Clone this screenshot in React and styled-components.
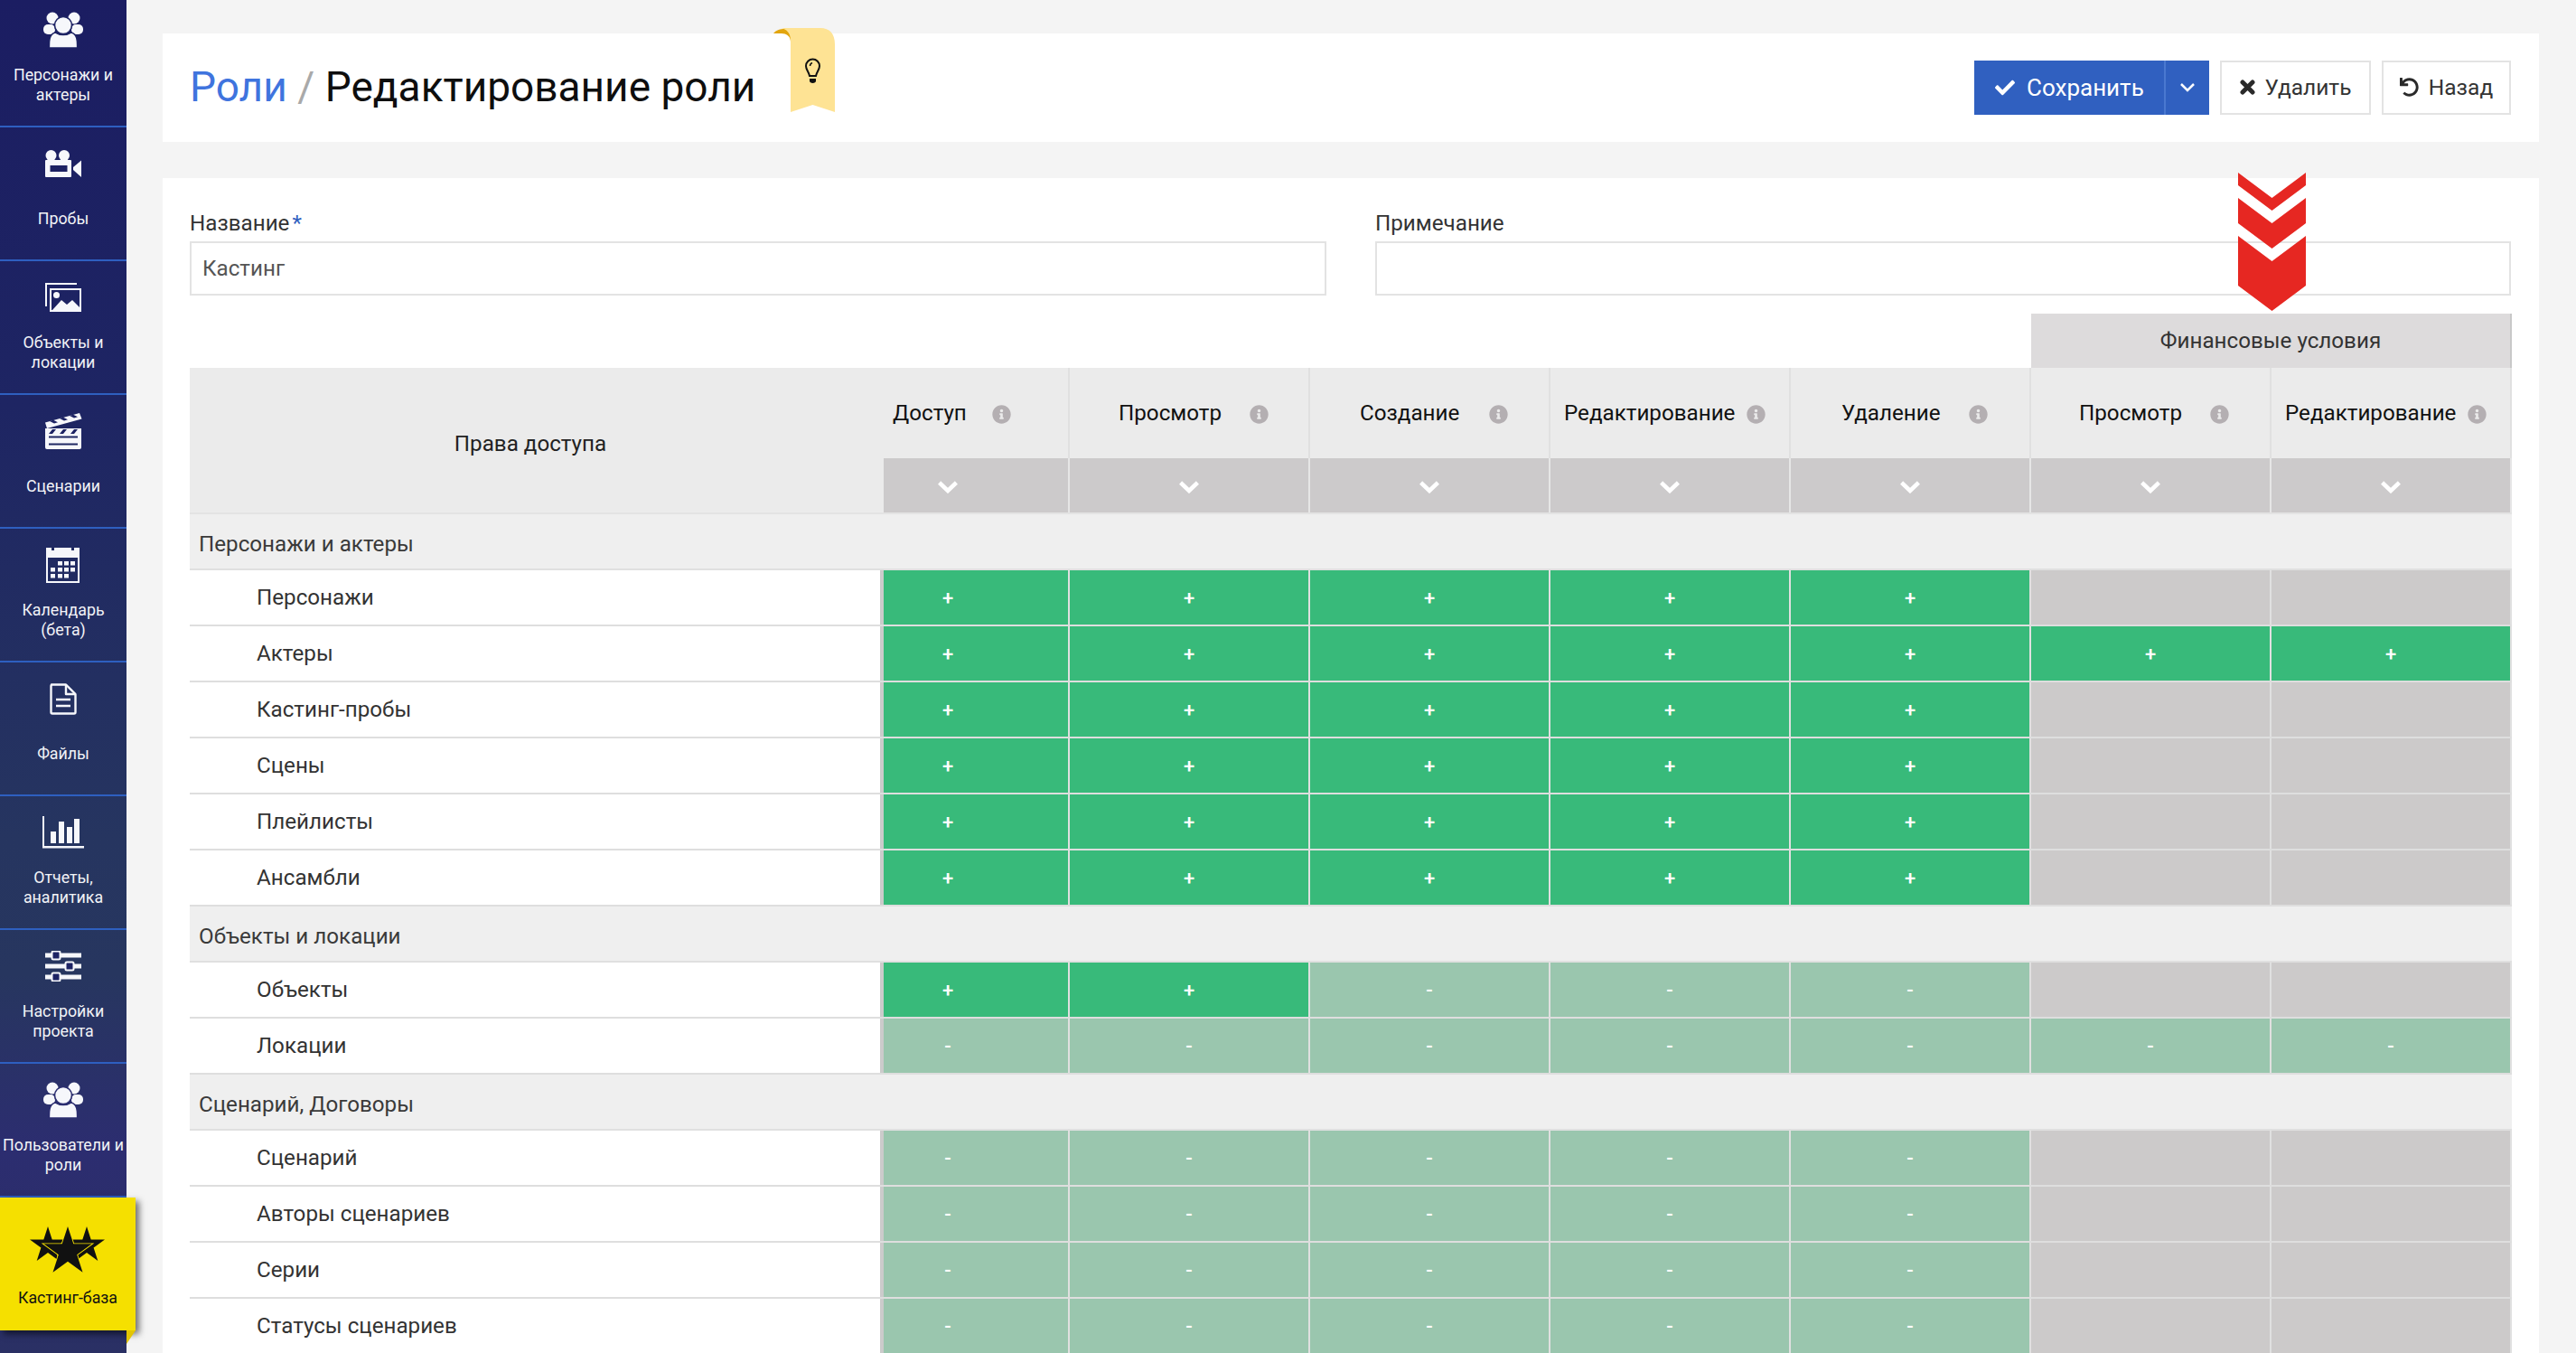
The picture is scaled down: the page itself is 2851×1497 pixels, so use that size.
import React from 'react';
import styled, { createGlobalStyle } from 'styled-components';
import { FaCheck, FaUndo, FaInfoCircle } from 'react-icons/fa';

const Global = createGlobalStyle`
  html, body { margin: 0; padding: 0; height: 100%; background: #f4f4f4; overflow: hidden; }
  body { font-family: Roboto, "Liberation Sans", sans-serif; -webkit-font-smoothing: antialiased; }
  * { box-sizing: border-box; }
`;

const Page = styled.div`
  display: flex;
  width: 2851px;
  height: 1497px;
  overflow: hidden;
  position: relative;
`;
const Sidebar = styled.nav`
  flex: 0 0 140px;
  width: 140px;
  height: 1497px;
  background: linear-gradient(180deg, #1b1d62 0%, #1e2563 30%, #263560 62%, #27365f 72%, #2c2d70 85%, #2a3064 100%);
  display: flex;
  flex-direction: column;
  position: relative;
  z-index: 3;
`;
const NavList = styled.div`
  margin-top: -7px;
  display: flex;
  flex-direction: column;
`;
const NavItem = styled.a`
  height: 148px;
  border-bottom: 2px solid #2e5fc0;
  display: flex;
  flex-direction: column;
  align-items: center;
  padding-top: 10px;
  color: #fff;
`;
const NavIcon = styled.div`
  height: 60px;
  display: flex;
  align-items: center;
  justify-content: center;
`;
const NavLabel = styled.div`
  margin-top: 7px;
  height: 48px;
  width: 140px;
  display: flex;
  align-items: center;
  justify-content: center;
  text-align: center;
  font-size: 17.8px;
  line-height: 22px;
  color: #f2f3f7;
`;
const CastingItem = styled.a`
  position: relative;
  width: 150px;
  height: 147px;
  background: #f5e000;
  box-shadow: 4px 4px 7px rgba(0,0,0,.55);
  display: flex;
  flex-direction: column;
  align-items: center;
  padding-top: 32px;
  color: #111;
  &::after {
    content: '';
    position: absolute;
    right: 0;
    top: 100%;
    width: 10px;
    height: 15px;
    background: #e3c500;
    clip-path: polygon(0 0, 100% 0, 0 100%);
  }
`;
const CastingLabel = styled.div`
  margin-top: 15px;
  font-size: 17.8px;
  line-height: 23px;
`;
const Main = styled.main`
  flex: 1;
  padding: 37px 41px 0 40px;
  display: flex;
  flex-direction: column;
  gap: 40px;
  min-width: 0;
`;
const HeaderCard = styled.header`
  position: relative;
  flex: none;
  height: 120px;
  background: #fff;
  display: flex;
  align-items: center;
  justify-content: space-between;
  padding: 0 31px 0 30px;
`;
const Title = styled.h1`
  margin: 0;
  font-size: 46px;
  font-weight: 400;
  line-height: 60px;
  color: #0e0e0e;
  display: flex;
  gap: 11.5px;
  position: relative;
  top: -1px;
`;
const Crumb = styled.span`color: #3f74de;`;
const Slash = styled.span`color: #a9a9a9;`;
const Ribbon = styled.svg`
  position: absolute;
  left: 676px;
  top: -6px;
`;
const Actions = styled.div`
  display: flex;
  gap: 12px;
`;
const SaveGroup = styled.div`
  display: flex;
  height: 60px;
  background: #3060c0;
  color: #fff;
`;
const SaveMain = styled.button`
  width: 210px;
  border: 0;
  background: transparent;
  color: inherit;
  font: inherit;
  font-size: 26px;
  display: flex;
  align-items: center;
  padding: 0 0 0 23px;
  gap: 13px;
`;
const SaveCaret = styled.button`
  width: 50px;
  border: 0;
  border-left: 2px solid #4a78d0;
  background: transparent;
  color: inherit;
  display: flex;
  align-items: center;
  justify-content: center;
`;
const GhostButton = styled.button`
  height: 60px;
  width: ${p => p.$w}px;
  border: 2px solid #e3e3e3;
  background: #fff;
  color: #333;
  font: inherit;
  font-size: 24.5px;
  display: flex;
  align-items: center;
  justify-content: center;
  gap: 11px;
  padding: 0 0 1px;
  svg { color: #2a2a2a; }
`;
const FormCard = styled.section`
  position: relative;
  background: #fff;
  flex: none;
  padding: 37px 30px 0;
`;
const FormRow = styled.div`
  display: grid;
  grid-template-columns: 1258px 1257px;
  column-gap: 54px;
`;
const Field = styled.div`
  display: flex;
  flex-direction: column;
`;
const Label = styled.label`
  font-size: 24.2px;
  line-height: 26px;
  height: 33px;
  color: #333;
`;
const Req = styled.span`
  color: #3060c0;
  margin-left: 3px;
`;
const Input = styled.input`
  height: 60px;
  border: 2px solid #e3e3e3;
  padding: 0 12px;
  font: inherit;
  font-size: 24.2px;
  color: #555;
  outline: none;
  background: #fff;
`;
const Arrows = styled.svg`
  position: absolute;
  left: 2297px;
  top: -6px;
  z-index: 2;
`;
const FinanceHead = styled.div`
  margin: 20px 0 0 2038px;
  height: 60px;
  background: #dddbdc;
  border-right: 2px solid #c8c8c8;
  display: flex;
  align-items: center;
  justify-content: center;
  font-size: 24.2px;
  color: #333;
`;
const cols = '768px 206px repeat(6, 266px)';
const HeadGrid = styled.div`
  display: grid;
  grid-template-columns: ${cols};
  grid-template-rows: 100px 60px;
  background: #ebebeb;
  border-bottom: 2px solid #e3e3e3;
`;
const HeadName = styled.div`
  grid-row: span 2;
  display: flex;
  align-items: center;
  justify-content: center;
  padding-right: 14px;
  font-size: 24.2px;
  color: #222;
  position: relative;
  top: 4px;
`;
const HeadCell = styled.div`
  display: flex;
  align-items: center;
  padding-left: ${p => p.$pad}px;
  gap: ${p => p.$gap}px;
  border-right: 2px solid #e0e0e0;
  font-size: 24.2px;
  color: #111;
  svg { color: #b4afb2; flex: none; position: relative; top: 1px; }
`;
const DropCell = styled.div`
  background: #cccacb;
  border-right: 2px solid #e6e6e6;
  display: flex;
  align-items: center;
  justify-content: center;
  color: #fff;
  padding-top: 3px;
  padding-right: ${p => (p.$first ? 62 : 0)}px;
`;
const SectionRow = styled.div`
  height: 62px;
  background: #efefef;
  border-bottom: 2px solid #e0e0e0;
  display: flex;
  align-items: center;
  padding: 5px 0 0 10px;
  font-size: 24.2px;
  color: #3a3a3a;
`;
const Row = styled.div`
  display: grid;
  grid-template-columns: ${cols};
  height: 62px;
  border-bottom: 2px solid #dedede;
`;
const RowName = styled.div`
  display: flex;
  align-items: center;
  padding-left: 74px;
  border-right: 4px solid #cbcbcb;
  font-size: 24.2px;
  color: #333;
  background: #fff;
`;
const colors = { '+': '#38ba7a', '-': '#9ac6ae', '': '#cccaca' };
const Cell = styled.div`
  background: ${p => colors[p.$v]};
  border-right: 2px solid #e0e0e0;
  display: flex;
  align-items: center;
  justify-content: center;
  padding-right: ${p => (p.$first ? 62 : 0)}px;
  color: #fff;
  font-size: 22px;
  font-weight: 500;
`;

const D = '#1d2364';
const UsersIcon = ({ dark = D }) => (
  <svg width="44" height="40" viewBox="0 0 44 40" fill="#f6f7fb">
    <circle cx="10" cy="7" r="6.5" />
    <circle cx="34" cy="7" r="6.5" />
    <rect x="0" y="14" width="13" height="11" rx="5" />
    <rect x="31" y="14" width="13" height="11" rx="5" />
    <circle cx="22" cy="15" r="9.5" stroke={dark} strokeWidth="1.6" />
    <path d="M6.5 40c-.2-8 0-15 6.5-17 5 3.5 13 3.500 18 0 6.500 2 6.700 9 6.500 17z" stroke={dark} strokeWidth="1.400" />
  </svg>
);
const CameraIcon = () => (
  <svg width="40" height="30" viewBox="0 0 40 30" fill="#f6f7fb">
    <circle cx="6.500" cy="6" r="6" />
    <circle cx="21" cy="6" r="6" />
    <path fillRule="evenodd" d="M1 11h27a1 1 0 0 1 1 1v17a1 1 0 0 1-1 1H1a1 1 0 0 1-1-1V12a1 1 0 0 1 1-1zm4.500 6v7h19v-7z" />
    <path d="M31 19l9-7.500V30l-9-8z" />
  </svg>
);
const ImagesIcon = () => (
  <svg width="40" height="32" viewBox="0 0 40 32" fill="none" stroke="#f6f7fb" strokeWidth="2">
    <path d="M35 1H1v25" />
    <rect x="6" y="7" width="33" height="24" />
    <circle cx="12.500" cy="13.500" r="3.500" fill="#f6f7fb" stroke="none" />
    <path d="M8 30l10-11 6 5 6-5 8 8v3z" fill="#f6f7fb" stroke="none" />
  </svg>
);
const ClapperIcon = () => (
  <svg width="42" height="40" viewBox="0 0 42 40" fill="#f6f7fb">
    <path d="M1 10.500L39 0l2.500 6.500L3 17z" />
    <path d="M6 9l5 2.500 4-1.200-5-2.500zM17 6l5 2.500 4-1.200-5-2.500zM28 3l5 2.500 4-1.200-5-2.500z" fill={D} />
    <rect x="1" y="17" width="40" height="7" />
    <path d="M5 23l4-5h4l-4 5zM17 23l4-5h4l-4 5zM29 23l4-5h4l-4 5z" fill={D} />
    <path fillRule="evenodd" d="M1 24h40v14a2 2 0 0 1-2 2H3a2 2 0 0 1-2-2zm4 1.500v2h32v-2zm0 8v2h32v-2z" />
  </svg>
);
const CalendarIcon = () => (
  <svg width="38" height="40" viewBox="0 0 38 40" fill="#f6f7fb">
    <path fillRule="evenodd" d="M0 1h6v3h3V1h19v3h3V1h6v39H0zm2 11v26h33V12z" />
    {[[13, 16], [20, 16], [27, 16], [5, 23], [13, 23], [20, 23], [27, 23], [5, 30], [13, 30], [20, 30]].map(([x, y]) => (
      <rect key={`${x}-${y}`} x={x} y={y} width="5" height="4.500" />
    ))}
  </svg>
);
const FileIcon = () => (
  <svg width="30" height="35" viewBox="0 0 30 35" fill="none" stroke="#f6f7fb" strokeWidth="2.400" strokeLinejoin="round">
    <path d="M2 1.500h16L28.500 12v20a1.500 1.500 0 0 1-1.500 1.500H3A1.500 1.500 0 0 1 1.500 32V3A1.500 1.500 0 0 1 3 1.500z" />
    <path d="M18 1.500V12h10.500" />
    <path d="M7 18h16M7 25h16" />
  </svg>
);
const ChartIcon = () => (
  <svg width="46" height="36" viewBox="0 0 46 36" fill="#f6f7fb">
    <path d="M0 0h2v33h44v2.500H0z" />
    <rect x="9" y="17" width="6" height="13" />
    <rect x="18" y="6" width="6" height="24" />
    <rect x="27" y="12" width="6" height="18" />
    <rect x="35" y="3" width="6" height="27" />
  </svg>
);
const SlidersIcon = () => (
  <svg width="40" height="34" viewBox="0 0 40 34">
    {[[5, 12], [17, 27], [29, 12]].map(([y, x]) => (
      <g key={y}>
        <rect x="0" y={y - 2.500} width="40" height="5" fill="#f6f7fb" />
        <rect x={x - 4.500} y={y - 4.500} width="9" height="9" rx="1.500" fill={D} stroke="#f6f7fb" strokeWidth="2" />
      </g>
    ))}
  </svg>
);
const star = (cx, cy, r) => {
  const pts = [];
  for (let i = 0; i < 10; i++) {
    const rad = i % 2 ? r * 0.382 : r;
    const a = -Math.PI / 2 + (i * Math.PI) / 5;
    pts.push(`${(cx + rad * Math.cos(a)).toFixed(1)},${(cy + rad * Math.sin(a)).toFixed(1)}`);
  }
  return pts.join(' ');
};
const StarsIcon = () => (
  <svg width="84" height="52" viewBox="0 0 84 52">
    <polygon points={star(20, 21, 21)} fill="#111" />
    <polygon points={star(63, 21, 21)} fill="#111" />
    <polygon points={star(42, 28, 28)} fill="#111" stroke="#f5e000" strokeWidth="1.800" paintOrder="stroke" />
  </svg>
);
const CrossIcon = () => (
  <svg width="17" height="17" viewBox="0 0 17 17" stroke="currentColor" strokeWidth="5" strokeLinecap="round">
    <path d="M3 3l11 11M14 3L3 14" />
  </svg>
);
const ThickChevron = () => (
  <svg width="22" height="15" viewBox="0 0 22 15" fill="none" stroke="#fff" strokeWidth="4.500">
    <path d="M1.600 3L11 12l9.400-9" />
  </svg>
);

const navItems = [
  [<UsersIcon key="i" />, 'Персонажи и актеры'],
  [<CameraIcon key="i" />, 'Пробы'],
  [<ImagesIcon key="i" />, 'Объекты и локации'],
  [<ClapperIcon key="i" />, 'Сценарии'],
  [<CalendarIcon key="i" />, 'Календарь (бета)'],
  [<FileIcon key="i" />, 'Файлы'],
  [<ChartIcon key="i" />, 'Отчеты, аналитика'],
  [<SlidersIcon key="i" />, 'Настройки проекта'],
  [<UsersIcon key="i" dark="#2b2d70" />, 'Пользователи и роли'],
];

const heads = [
  ['Доступ', 10, 28],
  ['Просмотр', 54, 31],
  ['Создание', 55, 33],
  ['Редактирование', 15, 13],
  ['Удаление', 56, 31],
  ['Просмотр', 53, 31],
  ['Редактирование', 15, 13],
];

const all = v => Array(7).fill(v);
const five = (v, tail = '') => [...Array(5).fill(v), tail, tail];
const table = [
  ['Персонажи и актеры', [
    ['Персонажи', five('+')],
    ['Актеры', all('+')],
    ['Кастинг-пробы', five('+')],
    ['Сцены', five('+')],
    ['Плейлисты', five('+')],
    ['Ансамбли', five('+')],
  ]],
  ['Объекты и локации', [
    ['Объекты', ['+', '+', '-', '-', '-', '', '']],
    ['Локации', all('-')],
  ]],
  ['Сценарий, Договоры', [
    ['Сценарий', five('-')],
    ['Авторы сценариев', five('-')],
    ['Серии', five('-')],
    ['Статусы сценариев', five('-')],
  ]],
];

export default function App() {
  return (
    <Page>
      <Global />
      <Sidebar>
        <NavList>
          {navItems.map(([icon, label]) => (
            <NavItem key={label}>
              <NavIcon>{icon}</NavIcon>
              <NavLabel>{label}</NavLabel>
            </NavItem>
          ))}
          <CastingItem>
            <StarsIcon />
            <CastingLabel>Кастинг-база</CastingLabel>
          </CastingItem>
        </NavList>
      </Sidebar>
      <Main>
        <HeaderCard>
          <Title>
            <Crumb>Роли</Crumb>
            <Slash>/</Slash>
            <span>Редактирование роли</span>
          </Title>
          <Ribbon width="68" height="93" viewBox="0 0 68 93">
            <path d="M0 6C3 2 8 1 12 1c4 0 7 3 7 8v6C19 9 14 6 9 6z" fill="#e2a50d" />
            <path d="M8 0h44c10 0 16 6 16 18v75L43.500 85 19 93V14C19 6 15 1 8 0z" fill="#fee394" />
            <g transform="translate(36 35)" fill="none" stroke="#111" strokeWidth="2">
              <path d="M4 18C3 13 0 11 0 7a7.500 7.500 0 0 1 15 0c0 4-3 6-4 11z" />
              <path d="M4 21h7v2.500c0 1.500-1.500 2.500-3.500 2.500S4 25 4 23.500z" fill="#111" stroke="none" />
              <path d="M4.500 7c0-1.500 1-3 2.500-3.500" strokeWidth="1.500" />
            </g>
          </Ribbon>
          <Actions>
            <SaveGroup>
              <SaveMain><FaCheck size={22} />Сохранить</SaveMain>
              <SaveCaret>
                <svg width="20" height="12" viewBox="0 0 20 12" fill="none" stroke="#fff" strokeWidth="2.500">
                  <path d="M3 2l7 7 7-7" />
                </svg>
              </SaveCaret>
            </SaveGroup>
            <GhostButton $w={167}><CrossIcon />Удалить</GhostButton>
            <GhostButton $w={143}><FaUndo size={21} />Назад</GhostButton>
          </Actions>
        </HeaderCard>
        <FormCard>
          <Arrows width="75" height="153" viewBox="0 0 75 153" fill="#e62722">
            <path d="M0 0l37.500 28L75 0v14L37.500 42 0 14z" />
            <path d="M0 28l37.500 28L75 28v28L37.500 84 0 56z" />
            <path d="M0 70l37.500 28L75 70v55l-37.500 28L0 125z" />
          </Arrows>
          <FormRow>
            <Field>
              <Label>Название<Req>*</Req></Label>
              <Input defaultValue="Кастинг" />
            </Field>
            <Field>
              <Label>Примечание</Label>
              <Input />
            </Field>
          </FormRow>
          <FinanceHead>Финансовые условия</FinanceHead>
          <HeadGrid>
            <HeadName>Права доступа</HeadName>
            {heads.map(([t, pad, gap], i) => (
              <HeadCell key={i} $pad={pad} $gap={gap}>
                {t}
                <FaInfoCircle size={21} />
              </HeadCell>
            ))}
            {heads.map((_, i) => (
              <DropCell key={i} $first={i === 0}><ThickChevron /></DropCell>
            ))}
          </HeadGrid>
          {table.map(([section, rows]) => (
            <React.Fragment key={section}>
              <SectionRow>{section}</SectionRow>
              {rows.map(([name, vals]) => (
                <Row key={name}>
                  <RowName>{name}</RowName>
                  {vals.map((v, i) => <Cell key={i} $v={v} $first={i === 0}>{v}</Cell>)}
                </Row>
              ))}
            </React.Fragment>
          ))}
        </FormCard>
      </Main>
    </Page>
  );
}
